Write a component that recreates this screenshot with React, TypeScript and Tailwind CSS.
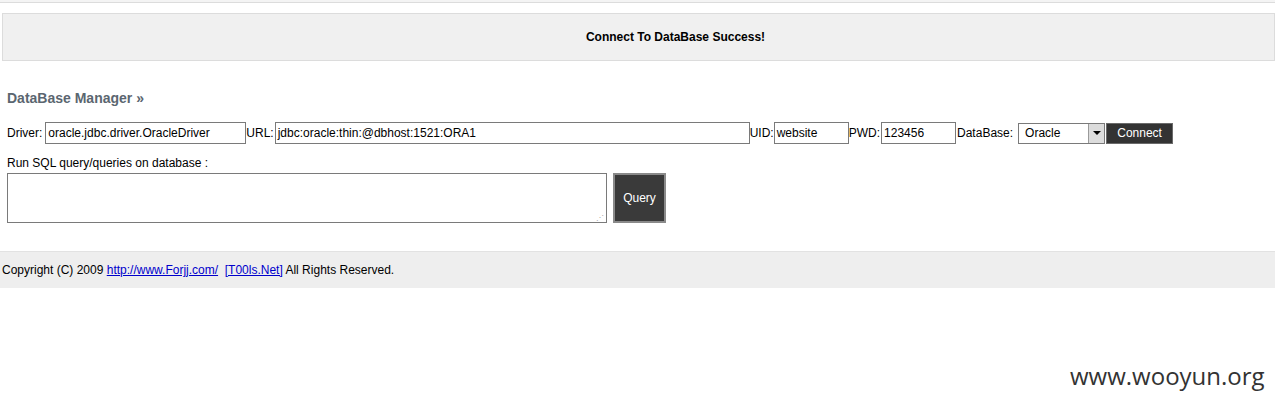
const Field = ({ label, value, width, gap = 'ml-[3px]' }: { label: string; value: string; width: string; gap?: string }) => (
  <>
    <span>{label}</span>
    <div className={`${gap} ${width} h-[22px] border border-[#7a7a7a] bg-white pl-[2px] flex items-center`}>{value}</div>
  </>
);

export default function App() {
  return (
    <div className="relative w-[1275px] h-[405px] overflow-hidden bg-white text-[12px] text-black" style={{ fontFamily: '"Liberation Sans", Arial, sans-serif' }}>
      {/* top rule */}
      <div className="h-[3px] border-b border-[#dcdcdc] bg-[#f4f4f4]" />

      {/* status message */}
      <div className="mt-[10px] ml-[2px] h-[48px] border border-[#dcdcdc] bg-[#f0f0f0] flex items-center justify-center pl-[74px] font-bold">
        Connect To DataBase Success!
      </div>

      {/* manager */}
      <div className="px-[7px]">
        <div className="mt-[27px] text-[14px] font-bold text-[#5b6670] leading-[20px]">DataBase Manager »</div>

        <div className="mt-[14px] flex items-center h-[22px] whitespace-nowrap">
          <Field label="Driver:" value="oracle.jdbc.driver.OracleDriver" width="w-[201px]" />
          <Field label="URL:" value="jdbc:oracle:thin:@dbhost:1521:ORA1" width="w-[475px]" gap="ml-[1px]" />
          <Field label="UID:" value="website" width="w-[75px]" gap="ml-[0px]" />
          <Field label="PWD:" value="123456" width="w-[75px]" gap="ml-[1px]" />
          <span className="ml-[1px]">DataBase:</span>
          <div className="ml-[5px] w-[87px] h-[21px] border border-[#7a7a7a] bg-white flex items-center">
            <span className="flex-1 pl-[6px]">Oracle</span>
            <div className="w-[16px] h-[19px] border-l border-[#9a9a9a] bg-[#dcdcdc] flex items-center justify-center">
              <div className="w-0 h-0 border-l-[4px] border-r-[4px] border-t-[4px] border-l-transparent border-r-transparent border-t-black" />
            </div>
          </div>
          <button className="ml-[1px] w-[67px] h-[21px] bg-[#333333] border border-[#6a6a6a] text-white text-[12px]">Connect</button>
        </div>

        <div className="mt-[12px] leading-[14px]">Run SQL query/queries on database :</div>

        <div className="mt-[3px] flex items-start">
          <div className="relative w-[600px] h-[50px] border border-[#7a7a7a] bg-white">
            <span className="absolute right-[2px] bottom-0 text-[8px] leading-[8px] text-[#aaa]">⋰</span>
          </div>
          <button className="ml-[6px] w-[53px] h-[50px] bg-[#3a3a3a] border-2 border-[#8a8a8a] text-white text-[12px]">Query</button>
        </div>
      </div>

      {/* footer */}
      <div className="mt-[28px] h-[37px] bg-[#eeeeee] border-t border-[#e2e2e2] flex items-center pl-[2px] whitespace-pre">
        <span>Copyright (C) 2009 </span>
        <a href="#" className="text-[#0000cc] underline">http://www.Forjj.com/</a>
        <span>  </span>
        <a href="#" className="text-[#0000cc] underline">[T00ls.Net]</a>
        <span> All Rights Reserved.</span>
      </div>

      {/* watermark */}
      <div className="absolute left-[1070px] top-[360px] text-[24px] text-[#333] leading-[32px]" style={{ fontFamily: '"Open Sans", "Noto Sans", sans-serif' }}>
        www.wooyun.org
      </div>
    </div>
  );
}
